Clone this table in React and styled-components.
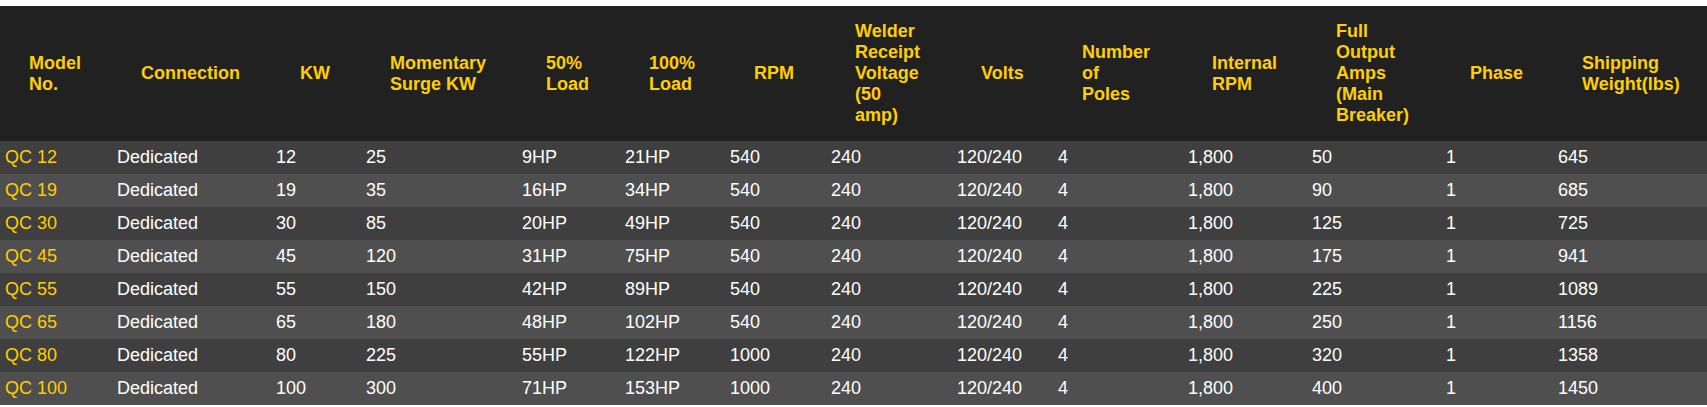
import React from "react";
import styled, { createGlobalStyle } from "styled-components";

const Global = createGlobalStyle`
  html, body { margin: 0; padding: 0; background: #ffffff; }
  body { font-family: "Liberation Sans", Arial, sans-serif; }
`;

const Page = styled.div`
  padding-top: 6px;
  width: 1707px;
`;

const Table = styled.table`
  width: 1707px;
  table-layout: fixed;
  border-collapse: collapse;
  border-spacing: 0;
  font-family: "Liberation Sans", Arial, sans-serif;
  font-size: 18px;
`;

const Col = styled.col`
  width: ${(p) => p.$w}px;
`;

const HeadRow = styled.tr`
  background: #212121;
  height: 135px;
`;

const HeadCell = styled.th`
  padding: 0 4px 0 29px;
  text-align: left;
  vertical-align: middle;
  color: #ffcf00;
  font-weight: 700;
  line-height: 21px;
  white-space: nowrap;
`;

const BodyRow = styled.tr`
  background: ${(p) => (p.$alt ? "#4f4f4f" : "#3f3f3f")};
`;

const Cell = styled.td`
  padding: 6px 4px 6px 5px;
  line-height: 21px;
  color: ${(p) => (p.$accent ? "#ffcc00" : "#ffffff")};
  white-space: nowrap;
`;

const widths = [112, 159, 90, 156, 103, 105, 101, 126, 101, 130, 124, 134, 112, 154];

const headers = [
  ["Model", "No."],
  ["Connection"],
  ["KW"],
  ["Momentary", "Surge KW"],
  ["50%", "Load"],
  ["100%", "Load"],
  ["RPM"],
  ["Welder", "Receipt", "Voltage", "(50", "amp)"],
  ["Volts"],
  ["Number", "of", "Poles"],
  ["Internal", "RPM"],
  ["Full", "Output", "Amps", "(Main", "Breaker)"],
  ["Phase"],
  ["Shipping", "Weight(lbs)"],
];

const raw = [
  ["QC 12", "12", "25", "9HP", "21HP", "540", "50", "645"],
  ["QC 19", "19", "35", "16HP", "34HP", "540", "90", "685"],
  ["QC 30", "30", "85", "20HP", "49HP", "540", "125", "725"],
  ["QC 45", "45", "120", "31HP", "75HP", "540", "175", "941"],
  ["QC 55", "55", "150", "42HP", "89HP", "540", "225", "1089"],
  ["QC 65", "65", "180", "48HP", "102HP", "540", "250", "1156"],
  ["QC 80", "80", "225", "55HP", "122HP", "1000", "320", "1358"],
  ["QC 100", "100", "300", "71HP", "153HP", "1000", "400", "1450"],
];

const rows = raw.map(([model, kw, surge, half, full, rpm, amps, weight]) => [
  model,
  "Dedicated",
  kw,
  surge,
  half,
  full,
  rpm,
  "240",
  "120/240",
  "4",
  "1,800",
  amps,
  "1",
  weight,
]);

export default function App() {
  return (
    <Page>
      <Global />
      <Table>
        <colgroup>
          {widths.map((w, i) => (
            <Col key={i} $w={w} />
          ))}
        </colgroup>
        <thead>
          <HeadRow>
            {headers.map((lines, i) => (
              <HeadCell key={i}>
                {lines.map((l, j) => (
                  <React.Fragment key={j}>
                    {j > 0 && <br />}
                    {l}
                  </React.Fragment>
                ))}
              </HeadCell>
            ))}
          </HeadRow>
        </thead>
        <tbody>
          {rows.map((r, i) => (
            <BodyRow key={i} $alt={i % 2 === 1}>
              {r.map((c, j) => (
                <Cell key={j} $accent={j === 0}>
                  {c}
                </Cell>
              ))}
            </BodyRow>
          ))}
        </tbody>
      </Table>
    </Page>
  );
}
